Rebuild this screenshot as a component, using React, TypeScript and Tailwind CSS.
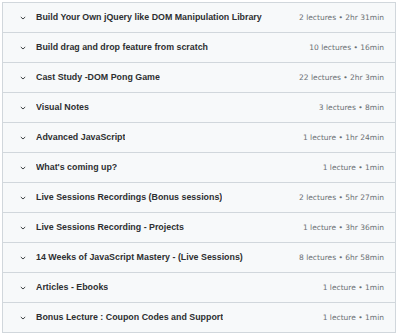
import React from 'react';

const sections = [
  { title: 'Build Your Own jQuery like DOM Manipulation Library', meta: '2 lectures • 2hr 31min' },
  { title: 'Build drag and drop feature from scratch', meta: '10 lectures • 16min' },
  { title: 'Cast Study -DOM Pong Game', meta: '22 lectures • 2hr 3min' },
  { title: 'Visual Notes', meta: '3 lectures • 8min' },
  { title: 'Advanced JavaScript', meta: '1 lecture • 1hr 24min' },
  { title: "What's coming up?", meta: '1 lecture • 1min' },
  { title: 'Live Sessions Recordings (Bonus sessions)', meta: '2 lectures • 5hr 27min' },
  { title: 'Live Sessions Recording - Projects', meta: '1 lecture • 3hr 36min' },
  { title: '14 Weeks of JavaScript Mastery - (Live Sessions)', meta: '8 lectures • 6hr 58min' },
  { title: 'Articles - Ebooks', meta: '1 lecture • 1min' },
  { title: 'Bonus Lecture : Coupon Codes and Support', meta: '1 lecture • 1min' },
];

const Chevron = () => (
  <svg width="8" height="8" viewBox="0 0 8 8" className="shrink-0">
    <path d="M1.8 3 L4 5 L6.2 3" fill="none" stroke="#3e4143" strokeWidth="1" />
  </svg>
);

export default function App() {
  return (
    <div className="w-[400px] h-[334px] bg-white pt-[2px] pl-[2px] font-['Liberation_Sans',sans-serif]">
      <div className="w-[394px] border border-[#d1d7dc] bg-[#f7f9fa]">
        {sections.map((s, i) => (
          <div
            key={i}
            className={`flex items-center h-[29px] pl-[16px] pr-[11px] ${i > 0 ? 'border-t border-[#d1d7dc] h-[30px]' : ''}`}
          >
            <Chevron />
            <span className="ml-[9px] text-[8.85px] font-bold text-[#2d2f31] truncate">{s.title}</span>
            <span className="ml-auto font-['DejaVu_Sans',sans-serif] text-[7.5px] text-[#6a6f73] whitespace-nowrap">
              {s.meta}
            </span>
          </div>
        ))}
      </div>
    </div>
  );
}
